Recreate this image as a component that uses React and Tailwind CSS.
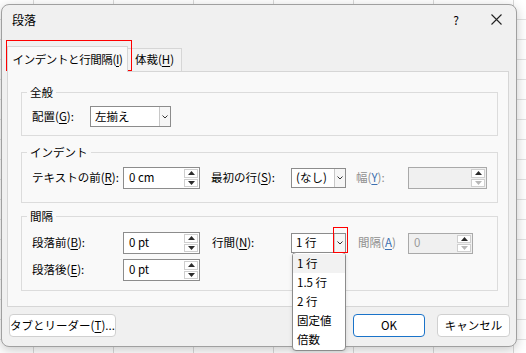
import React from 'react';

const U = ({ children }) => <span className="underline underline-offset-[2px] decoration-[1px]">{children}</span>;

function Tri({ up, dim }) {
  return (
    <svg width="7" height="4" viewBox="0 0 7 4">
      <path d={up ? 'M0 4 L3.5 0 L7 4 Z' : 'M0 0 L3.5 4 L7 0 Z'} fill={dim ? '#b8b8b8' : '#2b2b2b'} />
    </svg>
  );
}

function Spin({ size, value, disabled }) {
  return (
    <div className={`flex items-stretch border ${size} ${disabled ? 'border-[#a9a9a9] bg-[#f0f0f0] text-[#9a9a9a]' : 'border-[#8c8c8c] bg-white text-black'}`}>
      <div className="flex flex-1 items-center pl-[5px]">{value}</div>
      <div className="flex w-[15px] flex-col gap-[1px] py-[1px] pr-[1px]">
        <div className="flex flex-1 items-center justify-center border border-[#cfcfcf] bg-white">
          <Tri up />
        </div>
        <div className="flex flex-1 items-center justify-center border border-[#cfcfcf] bg-white">
          <Tri dim={disabled} />
        </div>
      </div>
    </div>
  );
}

function Select({ size, value }) {
  return (
    <div className={`flex items-stretch border border-[#8c8c8c] bg-white ${size}`}>
      <div className="flex flex-1 items-center pl-[4px]">{value}</div>
      <div className="flex w-[11px] items-center justify-center border-l border-[#c8c8c8] bg-[#f6f6f6]">
        <svg width="6" height="4" viewBox="0 0 6 4">
          <path d="M0.5 0.5 L3 3 L5.5 0.5" fill="none" stroke="#333" strokeWidth="1" />
        </svg>
      </div>
    </div>
  );
}

function Group({ title, h, className, children }) {
  return (
    <fieldset className={`mx-[13px] w-[477px] border border-[#dcdcdc] px-[10px] ${h} ${className}`}>
      <legend className="-ml-[5px] px-[3px] leading-[14px]">{title}</legend>
      {children}
    </fieldset>
  );
}

export default function App() {
  return (
    <div className="relative h-[353px] w-[526px] overflow-hidden bg-white bg-[linear-gradient(to_right,#d9d9d9_1px,transparent_1px),linear-gradient(to_bottom,#e2e2e2_1px,transparent_1px)] [background-size:80px_20px] [background-position:33px_19px] pl-[1px] pt-[4px] font-['Noto_Sans_CJK_JP',sans-serif] text-[11.5px] text-black">
      <div className="relative flex h-[343px] w-[516px] flex-col rounded-[8px] border border-[#a0a0a0] bg-[#f0f0f0] shadow-[0_3px_12px_rgba(0,0,0,0.22)]">
        {/* title bar */}
        <div className="flex h-[29px] items-center pl-[10px] pr-[14px]">
          <div className="flex-1 text-[12px]">段落</div>
          <div className="mr-[32px] text-[12px]">?</div>
          <svg width="11" height="11" viewBox="0 0 11 11">
            <path d="M0.5 0.5 L10.5 10.5 M10.5 0.5 L0.5 10.5" stroke="#222" strokeWidth="1.1" />
          </svg>
        </div>

        {/* tabs */}
        <div className="flex h-[37px] items-end pl-[5px]">
          <div className="relative z-10 -mb-[1px] flex h-[26px] w-[121px] items-center justify-center border border-b-0 border-[#d6d6d6] bg-[#f9f9f9] tracking-[-0.4px]">
            インデントと行間隔(<U>I</U>)
          </div>
          <div className="flex h-[23px] w-[54px] items-center justify-center border border-b-0 border-l-0 border-[#d6d6d6] bg-[#f3f3f3]">
            体裁(<U>H</U>)
          </div>
        </div>

        {/* panel */}
        <div className="mx-[5px] flex h-[236px] w-[502px] flex-col border border-[#d6d6d6] bg-[#f9f9f9]">
          <Group title="全般" h="h-[51px]" className="mt-[13px]">
            <div className="flex items-center pt-[7px]">
              <div className="w-[58px]">配置(<U>G</U>):</div>
              <Select size="h-[21px] w-[81px]" value="左揃え" />
            </div>
          </Group>

          <Group title="インデント" h="h-[58px]" className="mt-[9px]">
            <div className="flex items-center pt-[8px]">
              <div className="w-[91px]">テキストの前(<U>R</U>):</div>
              <Spin size="h-[22px] w-[77px]" value="0 cm" />
              <div className="ml-[11px] w-[80px]">最初の行(<U>S</U>):</div>
              <Select size="h-[20px] w-[55px]" value="(なし)" />
              <div className="ml-[10px] w-[52px] text-[#8f8f8f]">
                幅(<span className="text-[#3c6fb0] underline underline-offset-[2px]">Y</span>):
              </div>
              <Spin size="h-[22px] w-[79px]" value="" disabled />
            </div>
          </Group>

          <Group title="間隔" h="h-[82px]" className="mt-[6px]">
            <div className="flex flex-col gap-[5px] pt-[9px]">
              <div className="flex items-center">
                <div className="w-[91px]">段落前(<U>B</U>):</div>
                <Spin size="h-[22px] w-[77px]" value="0 pt" />
                <div className="ml-[12px] w-[79px]">行間(<U>N</U>):</div>
                <Select size="h-[20px] w-[55px]" value="1 行" />
                <div className="ml-[12px] w-[50px] text-[#8f8f8f]">
                  間隔(<span className="text-[#3c6fb0] underline underline-offset-[2px]">A</span>)
                </div>
                <Spin size="h-[21px] w-[65px]" value="0" disabled />
              </div>
              <div className="flex items-center">
                <div className="w-[91px]">段落後(<U>E</U>):</div>
                <Spin size="h-[22px] w-[77px]" value="0 pt" />
              </div>
            </div>
          </Group>
        </div>

        {/* buttons */}
        <div className="mt-[7px] flex items-center pl-[7px] pr-[6px]">
          <button className="h-[23px] w-[107px] rounded-[4px] border border-[#d0d0d0] bg-white">
            タブとリーダー(<U>T</U>)...
          </button>
          <div className="flex-1" />
          <button className="h-[23px] w-[72px] rounded-[4px] border-[1.5px] border-[#1a73c9] bg-white">OK</button>
          <button className="ml-[12px] h-[23px] w-[73px] rounded-[4px] border border-[#d0d0d0] bg-white">キャンセル</button>
        </div>

        {/* red annotation around tab */}
        <div className="absolute left-[4px] top-[35px] h-[31px] w-[126px] border border-[#ff0000]" />
      </div>

      {/* open dropdown list */}
      <div className="absolute left-[292px] top-[252px] flex w-[54px] flex-col rounded-[4px] border border-[#8c8c8c] bg-white py-[1px] shadow-[0_2px_4px_rgba(0,0,0,0.12)]">
        <div className="flex h-[19px] items-center bg-[#f2f2f2] pl-[4px]">1 行</div>
        <div className="flex h-[19px] items-center pl-[4px]">1.5 行</div>
        <div className="flex h-[19px] items-center pl-[4px]">2 行</div>
        <div className="flex h-[19px] items-center pl-[4px]">固定値</div>
        <div className="flex h-[19px] items-center pl-[4px]">倍数</div>
      </div>

      {/* red annotation around drop arrow */}
      <div className="absolute left-[333px] top-[227px] z-20 h-[26px] w-[15px] border border-[#ff0000]" />
    </div>
  );
}
